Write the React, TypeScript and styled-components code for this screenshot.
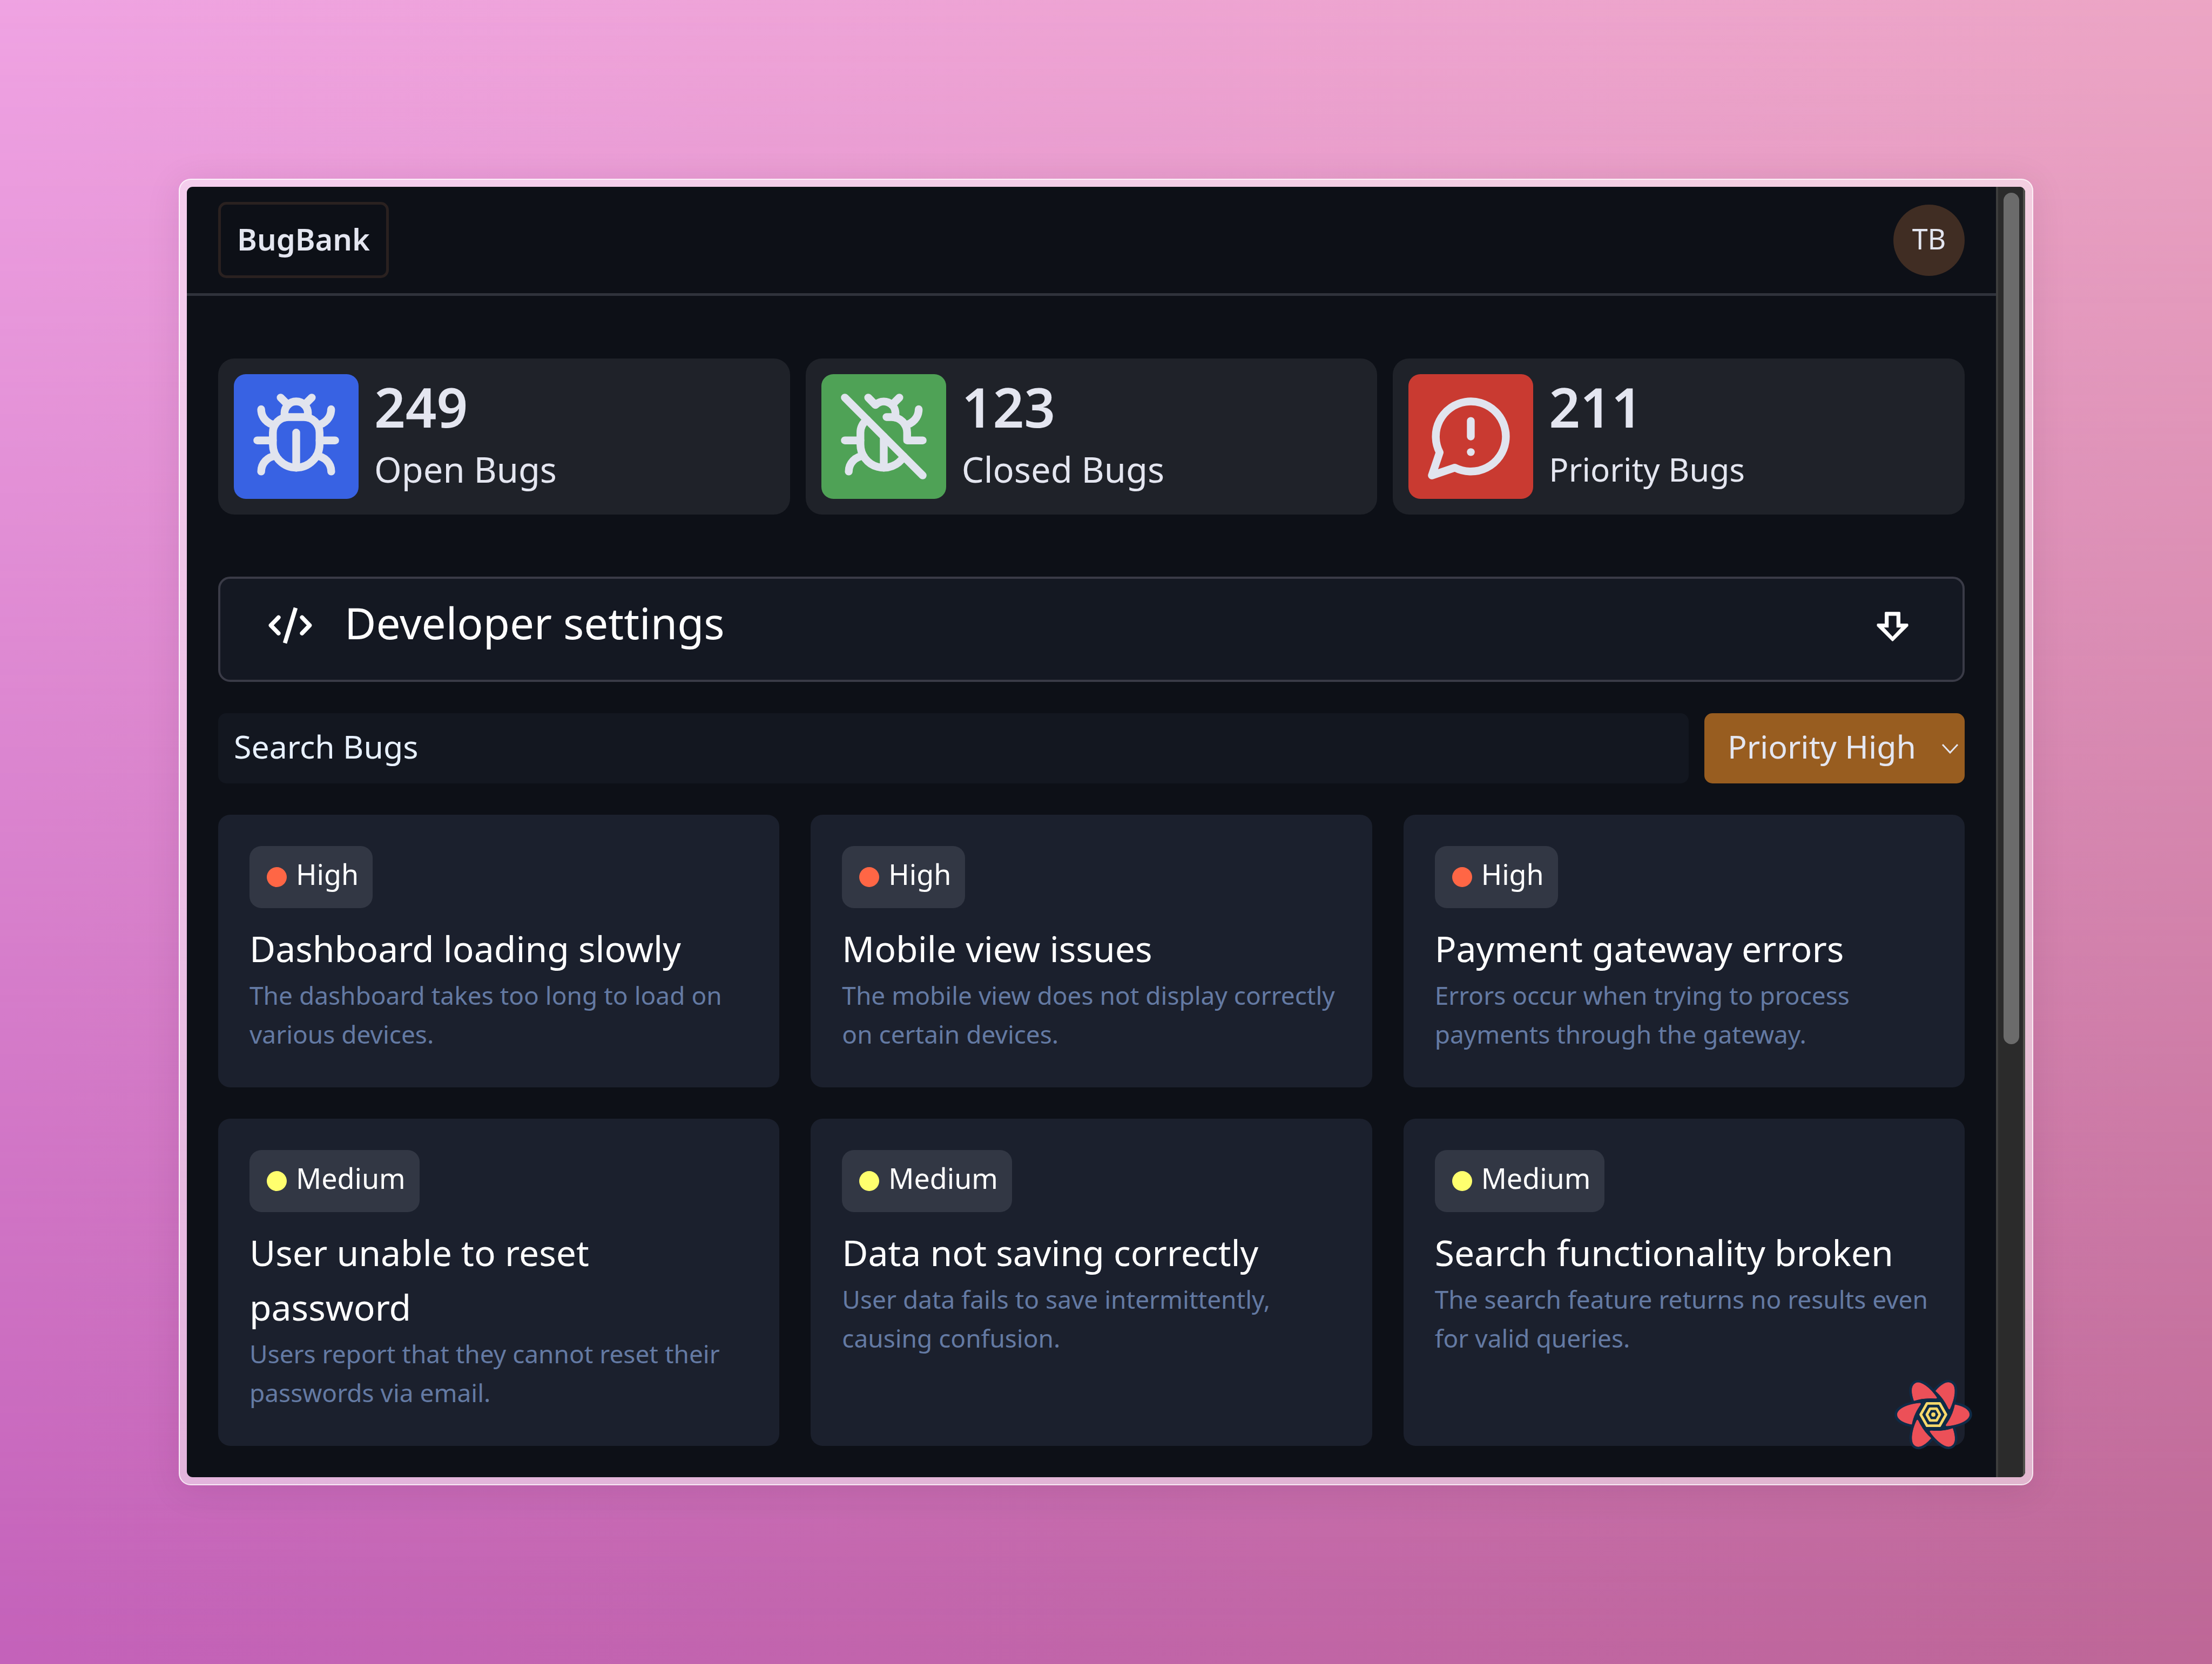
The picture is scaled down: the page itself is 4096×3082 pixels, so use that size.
import React from 'react';
import styled, { createGlobalStyle } from 'styled-components';

const GlobalStyle = createGlobalStyle`
  *, *::before, *::after { box-sizing: border-box; }
  body { margin: 0; }
  body, button, input, select {
    font-family: "Noto Sans", "Open Sans", sans-serif;
  }
  h1, h2, p { margin: 0; font-weight: 400; }
`;

const Backdrop = styled.div`
  position: relative;
  isolation: isolate;
  display: flex;
  min-height: 100vh;
  padding: 331px;
  background: linear-gradient(to right, #c462ba, #be6797);

  &::before {
    content: '';
    position: absolute;
    inset: 0;
    z-index: -1;
    background: linear-gradient(to right, #efa3e2, #eca5c4);
    mask-image: linear-gradient(to bottom, #000, transparent);
  }
`;

const Frame = styled.div`
  flex: 1;
  display: flex;
  padding: 13px;
  border: 2px solid rgba(255, 255, 255, 0.7);
  border-radius: 22px;
  background: rgba(255, 255, 255, 0.5);
  box-shadow: 0 8px 64px rgba(60, 0, 50, 0.1);
`;

const Window = styled.div`
  position: relative;
  flex: 1;
  display: flex;
  min-width: 0;
  overflow: hidden;
  border-radius: 11px;
  background: #0d1017;
  color: #e4e6f0;
`;

const Page = styled.div`
  flex: 1;
  min-width: 0;
`;

const ScrollTrack = styled.div`
  flex: none;
  width: 54px;
  padding: 11px 7px 0 10px;
  border: solid #3d3d3d;
  border-width: 0 4px;
  border-right-color: #50504c;
  background: #2b2b2b;
`;

const ScrollThumb = styled.div`
  height: 66.3%;
  border-radius: 15px;
  background: #6b6b6b;
`;

const Header = styled.header`
  display: flex;
  align-items: center;
  justify-content: space-between;
  padding: 28px 58px;
  border-bottom: 5px solid #2f323b;
`;

const Logo = styled.a`
  padding: 26px 30px 30px;
  border: 5px solid #2a2120;
  border-radius: 15px;
  color: inherit;
  font-size: 56px;
  font-weight: 600;
  line-height: 75px;
  text-decoration: none;
`;

const Avatar = styled.button`
  width: 132px;
  height: 132px;
  padding: 0 0 7px;
  border: 0;
  border-radius: 50%;
  background: #402d23;
  color: inherit;
  font-size: 52px;
`;

const Main = styled.main`
  display: grid;
  gap: 58px;
  padding: 116px 58px 58px;
`;

const Stats = styled.section`
  display: grid;
  grid-template-columns: repeat(3, minmax(0, 1fr));
  gap: 29px;
  margin-bottom: 57px;
`;

const StatCard = styled.div`
  display: flex;
  gap: 29px;
  height: 289px;
  padding: 29px;
  border-radius: 30px;
  background: #1f2229;
`;

const StatTile = styled.div<{ $color: string }>`
  display: grid;
  place-items: center;
  width: 231px;
  height: 231px;
  border-radius: 22px;
  background: ${(p) => p.$color};
`;

const StatIcon = styled.svg`
  width: 173px;
  height: 173px;
  fill: none;
  stroke: #e1e4ee;
  stroke-width: 2;
  stroke-linecap: round;
  stroke-linejoin: round;
`;

const StatValue = styled.p`
  font-size: 101px;
  font-weight: 600;
  line-height: 120px;
`;

const StatLabel = styled.p<{ $small?: boolean }>`
  font-size: ${(p) => (p.$small ? 60 : 65)}px;
  line-height: 113px;
`;

const Settings = styled.button`
  display: flex;
  align-items: flex-start;
  gap: 57px;
  width: 100%;
  padding: 43px 86px 57px;
  border: 4px solid #3a3b47;
  border-radius: 22px;
  background: #141822;
  color: #fff;
  text-align: left;
`;

const SettingsTitle = styled.span`
  flex: 1;
  font-size: 80px;
  line-height: 76px;
`;

const SettingsIcon = styled.svg`
  flex: none;
  width: 87px;
  height: 87px;
`;

const Filters = styled.form`
  display: flex;
  gap: 29px;
`;

const SearchInput = styled.input`
  flex: 1;
  min-width: 0;
  height: 130px;
  padding: 0 29px 8px;
  border: 0;
  border-radius: 15px;
  background: #131720;
  color: #e8f1ff;
  font-size: 59px;

  &::placeholder {
    color: inherit;
    opacity: 1;
  }
`;

const SelectWrap = styled.div`
  position: relative;
  flex: none;
  width: 482px;
`;

const PrioritySelect = styled.select`
  appearance: none;
  width: 100%;
  height: 130px;
  padding: 0 80px 8px 43px;
  border: 0;
  border-radius: 15px;
  background: #985d20;
  color: #e4e6f0;
  font-size: 59px;
`;

const Chevron = styled.svg`
  position: absolute;
  top: 54px;
  right: 11px;
  width: 32px;
  height: 24px;
  pointer-events: none;
`;

const BugGrid = styled.section`
  display: grid;
  grid-template-columns: repeat(3, minmax(0, 1fr));
  gap: 58px;
`;

const BugCard = styled.article`
  padding: 58px 58px 63px;
  border-radius: 22px;
  background: #1b202d;
`;

const Badge = styled.div`
  display: inline-flex;
  align-items: center;
  gap: 17px;
  height: 115px;
  padding: 0 26px 0 32px;
  border-radius: 22px;
  background: #323744;
  vertical-align: top;
`;

const Dot = styled.span<{ $color: string }>`
  width: 37px;
  height: 37px;
  border-radius: 50%;
  background: ${(p) => p.$color};
`;

const BadgeText = styled.span`
  padding-bottom: 12px;
  color: #fff;
  font-size: 52px;
  line-height: 72px;
`;

const BugTitle = styled.h2`
  margin-top: 24px;
  color: #fff;
  font-size: 66px;
  line-height: 101px;
`;

const BugText = styled.p`
  color: #647aa3;
  font-size: 46px;
  line-height: 72px;
`;

const QueryButton = styled.button`
  position: absolute;
  right: 98px;
  bottom: 50px;
  width: 144px;
  height: 132px;
  padding: 0;
  border: 0;
  background: none;
`;

const QueryLogo = styled.svg`
  display: block;
  width: 100%;
  height: 100%;
`;

const stats = [
  {
    value: '249',
    label: 'Open Bugs',
    color: '#3862e3',
    paths: [
      'm8 2 1.88 1.88',
      'M14.12 3.88 16 2',
      'M9 7.13v-1a3.003 3.003 0 1 1 6 0v1',
      'M12 20c-3.3 0-6-2.7-6-6v-3a4 4 0 0 1 4-4h4a4 4 0 0 1 4 4v3c0 3.3-2.7 6-6 6',
      'M12 20v-9',
      'M6.53 9C4.6 8.8 3 7.1 3 5',
      'M6 13H2',
      'M3 21c0-2.1 1.7-3.9 3.8-4',
      'M20.97 5c0 2.1-1.6 3.8-3.5 4',
      'M22 13h-4',
      'M17.2 17c2.1.1 3.8 1.9 3.8 4',
    ],
  },
  {
    value: '123',
    label: 'Closed Bugs',
    color: '#4fa256',
    paths: [
      'M15 7.13V6a3 3 0 0 0-5.14-2.1L8 2',
      'M14.12 3.88 16 2',
      'M22 13h-4v-2a4 4 0 0 0-4-4h-1.3',
      'M20.97 5c0 2.1-1.6 3.8-3.5 4',
      'm2 2 20 20',
      'M7.7 7.7A4 4 0 0 0 6 11v3a6 6 0 0 0 11.13 3.13',
      'M12 20v-8',
      'M6 13H2',
      'M3 21c0-2.1 1.7-3.9 3.8-4',
    ],
  },
  {
    value: '211',
    label: 'Priority Bugs',
    color: '#c93a31',
    small: true,
    paths: ['M7.9 20A9 9 0 1 0 4 16.1L2 22Z', 'M12 8v4', 'M12 16h.01'],
  },
];

const dotColors = { High: '#ff6645', Medium: '#ffff6e' };

const bugs: { priority: 'High' | 'Medium'; title: string; text: string }[] = [
  { priority: 'High', title: 'Dashboard loading slowly', text: 'The dashboard takes too long to load on various devices.' },
  { priority: 'High', title: 'Mobile view issues', text: 'The mobile view does not display correctly on certain devices.' },
  { priority: 'High', title: 'Payment gateway errors', text: 'Errors occur when trying to process payments through the gateway.' },
  { priority: 'Medium', title: 'User unable to reset password', text: 'Users report that they cannot reset their passwords via email.' },
  { priority: 'Medium', title: 'Data not saving correctly', text: 'User data fails to save intermittently, causing confusion.' },
  { priority: 'Medium', title: 'Search functionality broken', text: 'The search feature returns no results even for valid queries.' },
];

const PETAL =
  'M-82-70C-150-65-222-38-222 0C-222 30-185 50-134 60C-124 10-104-28-80-62Q-76-70-82-70Z';
const PETAL_ANGLES = [0, 60, 120, 180, 240, 300];

function Flower() {
  return (
    <QueryLogo viewBox="-240 -220 480 440" aria-hidden="true">
      <g fill="#0f2b47" stroke="#0f2b47" strokeWidth="34" strokeLinejoin="round">
        {PETAL_ANGLES.map((a) => (
          <path key={a} d={PETAL} transform={`rotate(${a})`} />
        ))}
        <circle r="100" />
      </g>
      <g fill="#ec5058" stroke="#ec5058" strokeWidth="3" strokeLinejoin="round">
        {PETAL_ANGLES.map((a) => (
          <path key={a} d={PETAL} transform={`rotate(${a})`} />
        ))}
      </g>
      <g fill="none" stroke="#f8d96b" strokeWidth="16" strokeLinejoin="round">
        <path d="M-78 0L-39-69H39L78 0L39 69H-39Z" />
        <path d="M-40 0L-20-36H20L40 0L20 36H-20Z" />
      </g>
      <circle r="13" fill="#f8d96b" />
    </QueryLogo>
  );
}

export default function App() {
  return (
    <>
      <GlobalStyle />
      <Backdrop>
        <Frame>
          <Window>
            <Page>
              <Header>
                <Logo href="#">BugBank</Logo>
                <Avatar type="button">TB</Avatar>
              </Header>
              <Main>
                <Stats>
                  {stats.map((s) => (
                    <StatCard key={s.label}>
                      <StatTile $color={s.color}>
                        <StatIcon viewBox="0 0 24 24" aria-hidden="true">
                          {s.paths.map((d) => (
                            <path key={d} d={d} />
                          ))}
                        </StatIcon>
                      </StatTile>
                      <div>
                        <StatValue>{s.value}</StatValue>
                        <StatLabel $small={s.small}>{s.label}</StatLabel>
                      </div>
                    </StatCard>
                  ))}
                </Stats>
                <Settings type="button" aria-expanded="false">
                  <SettingsIcon viewBox="0 0 96 96" fill="none" stroke="currentColor" strokeWidth="8.5" aria-hidden="true">
                    <path strokeLinecap="round" strokeLinejoin="round" d="M24 31.5L8.2 47.7L24 64M72 31.5L87.7 47.7L72 64" />
                    <path d="M59 12L37 84" />
                  </SettingsIcon>
                  <SettingsTitle>Developer settings</SettingsTitle>
                  <SettingsIcon viewBox="0 0 96 96" fill="currentColor" fillRule="evenodd" aria-hidden="true">
                    <path d="M32 22a2 2 0 0 1 2-2h28a2 2 0 0 1 2 2v22h14a2 2 0 0 1 2 2v3L49.5 79.5a2 2 0 0 1-3 0L16 49v-3a2 2 0 0 1 2-2h14zM40 28v24h-9.5L48 70.5L65.5 52H56V28z" />
                  </SettingsIcon>
                </Settings>
                <Filters>
                  <SearchInput type="text" placeholder="Search Bugs" aria-label="Search Bugs" />
                  <SelectWrap>
                    <PrioritySelect aria-label="Sort order" defaultValue="high">
                      <option value="high">Priority High</option>
                    </PrioritySelect>
                    <Chevron viewBox="0 0 32 24" fill="none" stroke="#e4e6f0" strokeWidth="3" aria-hidden="true">
                      <path d="M2 4L16 19L30 4" />
                    </Chevron>
                  </SelectWrap>
                </Filters>
                <BugGrid>
                  {bugs.map((b) => (
                    <BugCard key={b.title}>
                      <Badge>
                        <Dot $color={dotColors[b.priority]} />
                        <BadgeText>{b.priority}</BadgeText>
                      </Badge>
                      <BugTitle>{b.title}</BugTitle>
                      <BugText>{b.text}</BugText>
                    </BugCard>
                  ))}
                </BugGrid>
              </Main>
            </Page>
            <ScrollTrack>
              <ScrollThumb />
            </ScrollTrack>
            <QueryButton type="button" aria-label="Open query devtools">
              <Flower />
            </QueryButton>
          </Window>
        </Frame>
      </Backdrop>
    </>
  );
}
